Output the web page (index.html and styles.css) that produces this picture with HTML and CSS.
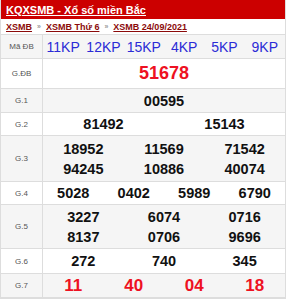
FILE: index.html
```html
<!DOCTYPE html>
<html lang="vi">
<head>
<meta charset="utf-8">
<link rel="stylesheet" href="styles.css">
</head>
<body>
<div class="box">
  <div class="head"><a href="#">KQXSMB - Xổ số miền Bắc</a></div>
  <div class="crumb"><a href="#">XSMB</a><span class="sep">»</span><a href="#">XSMB Thứ 6</a><span class="sep">»</span><a href="#">XSMB 24/09/2021</a></div>
  <table class="kq">
    <tr class="alt h24"><td class="lb">Mã ĐB</td><td class="val"><div class="g c6 kp"><span>11KP</span><span>12KP</span><span>15KP</span><span>4KP</span><span>5KP</span><span>9KP</span></div></td></tr>
    <tr class="h30"><td class="lb">G.ĐB</td><td class="val"><div class="g c1 db"><span>51678</span></div></td></tr>
    <tr class="alt h24"><td class="lb">G.1</td><td class="val"><div class="g c1 n"><span>00595</span></div></td></tr>
    <tr class="h23"><td class="lb">G.2</td><td class="val"><div class="g c2 n"><span>81492</span><span>15143</span></div></td></tr>
    <tr class="alt h46"><td class="lb">G.3</td><td class="val"><div class="g c3 n"><span>18952</span><span>11569</span><span>71542</span><span>94245</span><span>10886</span><span>40074</span></div></td></tr>
    <tr class="h23"><td class="lb">G.4</td><td class="val"><div class="g c4 n"><span>5028</span><span>0402</span><span>5989</span><span>6790</span></div></td></tr>
    <tr class="alt h44"><td class="lb">G.5</td><td class="val"><div class="g c3 n"><span>3227</span><span>6074</span><span>0716</span><span>8137</span><span>0706</span><span>9696</span></div></td></tr>
    <tr class="h25"><td class="lb">G.6</td><td class="val"><div class="g c3 n"><span>272</span><span>740</span><span>345</span></div></td></tr>
    <tr class="alt h24"><td class="lb">G.7</td><td class="val"><div class="g c4 r7"><span>11</span><span>40</span><span>04</span><span>18</span></div></td></tr>
  </table>
</div>
</body>
</html>
```
FILE: styles.css
```css
html, body { margin: 0; padding: 0; background: #fff; }
body { font-family: "Liberation Sans", Arial, sans-serif; }
.box { width: 284px; border: 1px solid #ddd; border-top: none; }
.head { background: #cc0000; height: 19px; padding-left: 5px; display: flex; align-items: center; }
.head a { color: #fff; font-weight: bold; font-size: 11px; text-decoration: underline; }
.crumb { height: 15px; padding-left: 5px; display: flex; align-items: center; gap: 5px; font-size: 9px; font-weight: bold; }
.crumb a { color: #8b0a0a; text-decoration: underline; }
.crumb .sep { color: #999; font-size: 7px; }
.kq { width: 100%; border-collapse: collapse; margin-top: 0; }
.kq td { border: 1px solid #ddd; padding: 0; }
.kq tr.alt td { background: #f5f5f5; }
.kq td:first-child { border-left: none; }
.kq td:last-child { border-right: none; }
.lb { width: 41px; text-align: center; font-size: 8px; color: #555; }
.h24 { height: 24px; } .h30 { height: 30px; } .h23 { height: 23px; } .h46 { height: 46px; } .h44 { height: 44px; } .h25 { height: 25px; }
.g { display: grid; text-align: center; align-items: center; }
.c1 { grid-template-columns: 1fr; }
.c2 { grid-template-columns: repeat(2, 1fr); }
.c3 { grid-template-columns: repeat(3, 1fr); }
.c4 { grid-template-columns: repeat(4, 1fr); }
.c6 { grid-template-columns: repeat(6, 1fr); }
.kp { color: #2b2bd6; font-size: 14px; }
.db { color: #ee1122; font-size: 18px; font-weight: bold; }
.n { color: #111; font-size: 14.5px; font-weight: bold; line-height: 20px; }
.r7 { color: #ee1122; font-size: 17px; font-weight: bold; }
```
